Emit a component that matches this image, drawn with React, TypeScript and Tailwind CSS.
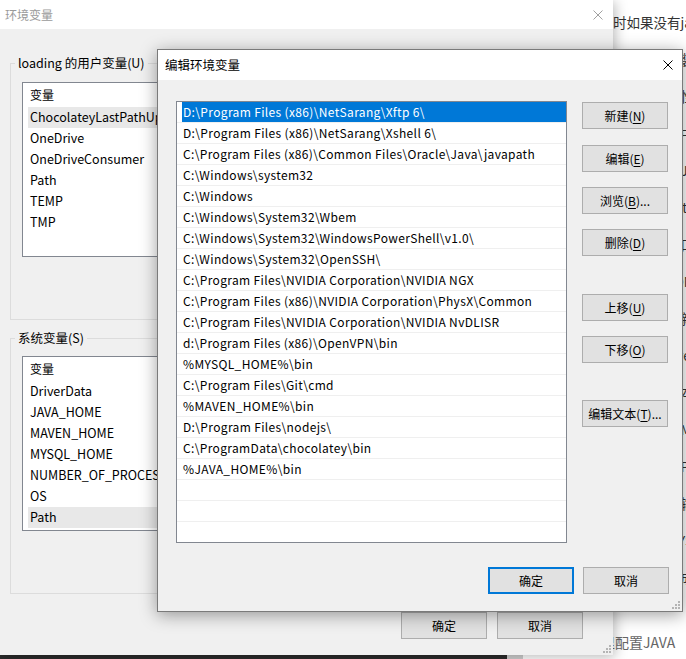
import React from "react";

const PATHS = [
  "D:\\Program Files (x86)\\NetSarang\\Xftp 6\\",
  "D:\\Program Files (x86)\\NetSarang\\Xshell 6\\",
  "C:\\Program Files (x86)\\Common Files\\Oracle\\Java\\javapath",
  "C:\\Windows\\system32",
  "C:\\Windows",
  "C:\\Windows\\System32\\Wbem",
  "C:\\Windows\\System32\\WindowsPowerShell\\v1.0\\",
  "C:\\Windows\\System32\\OpenSSH\\",
  "C:\\Program Files\\NVIDIA Corporation\\NVIDIA NGX",
  "C:\\Program Files (x86)\\NVIDIA Corporation\\PhysX\\Common",
  "C:\\Program Files\\NVIDIA Corporation\\NVIDIA NvDLISR",
  "d:\\Program Files (x86)\\OpenVPN\\bin",
  "%MYSQL_HOME%\\bin",
  "C:\\Program Files\\Git\\cmd",
  "%MAVEN_HOME%\\bin",
  "D:\\Program Files\\nodejs\\",
  "C:\\ProgramData\\chocolatey\\bin",
  "%JAVA_HOME%\\bin",
  "",
  "",
  "",
];

const USER_VARS = ["ChocolateyLastPathUpdate", "OneDrive", "OneDriveConsumer", "Path", "TEMP", "TMP"];
const SYS_VARS = ["DriverData", "JAVA_HOME", "MAVEN_HOME", "MYSQL_HOME", "NUMBER_OF_PROCESSORS", "OS", "Path"];

// text of the page behind the dialogs (mostly hidden)
const PAGE_LINES = [
  "时如果没有java环境变量，命令行会提示找不到命令",
  "如果已经安装过JDK，可以直接跳过下面的步骤",
  "打开系统属性，点击高级系统设置中的环境变量",
  "在系统变量中新建变量名为JAVA_HOME的变量",
  "变量值填写JDK的安装目录，例如D:\\Java\\jdk",
  "然后找到Path变量，点击编辑按钮进行修改",
  "在弹出的窗口中点击新建，添加以下内容",
  "%JAVA_HOME%\\bin 以及 %JAVA_HOME%\\jre\\bin",
  "保存之后重新打开命令行窗口进行验证",
  "输入 java -version 查看版本号是否正确",
  "如果显示版本信息，说明环境变量配置成功",
  "接下来配置MAVEN_HOME，步骤与上面相同",
  "同样需要在Path中添加 %MAVEN_HOME%\\bin",
  "打开命令行输入 mvn -v 进行检查验证",
  "最后配置MYSQL_HOME，添加到Path中即可",
  "所有配置完成以后记得点击确定保存设置",
];

function CloseIcon({ className }: { className?: string }) {
  return (
    <svg width="10" height="10" viewBox="0 0 10 10" className={className}>
      <path d="M0.5 0.5 L9.5 9.5 M9.5 0.5 L0.5 9.5" stroke="currentColor" strokeWidth="1" fill="none" />
    </svg>
  );
}

function Grip({ className }: { className?: string }) {
  return (
    <svg width="9" height="9" viewBox="0 0 9 9" className={className}>
      <g fill="#b4b4b4">
        <rect x="7" y="1" width="2" height="2" />
        <rect x="4" y="4" width="2" height="2" />
        <rect x="7" y="4" width="2" height="2" />
        <rect x="1" y="7" width="2" height="2" />
        <rect x="4" y="7" width="2" height="2" />
        <rect x="7" y="7" width="2" height="2" />
      </g>
    </svg>
  );
}

function WinButton({
  children,
  primary,
  className = "",
}: {
  children: React.ReactNode;
  primary?: boolean;
  className?: string;
}) {
  return (
    <div
      className={
        "w-[86px] h-[27px] shrink-0 flex items-center justify-center bg-[#e1e1e1] text-[12px] text-black " +
        (primary ? "border-2 border-[#0078d7] " : "border border-[#adadad] ") +
        className
      }
    >
      {children}
    </div>
  );
}

function Key({ children }: { children: React.ReactNode }) {
  return <span className="underline underline-offset-2">{children}</span>;
}

function VarList({ items, selected }: { items: string[]; selected: number }) {
  return (
    <div className="mx-[11px] h-[175px] bg-white border border-[#828790] pl-[5px] overflow-hidden">
      <div className="h-[24px] flex items-center pl-[2px] text-[12px]">变量</div>
      {items.map((name, i) => (
        <div
          key={name + i}
          className={
            "h-[21px] flex items-center pl-[2px] text-[12.5px] whitespace-nowrap " +
            (i === selected ? "bg-[#e8e8e8]" : "")
          }
        >
          {name}
        </div>
      ))}
    </div>
  );
}

function EnvDialog() {
  return (
    <div className="absolute left-0 top-0 w-[613px] h-[655px] flex flex-col bg-[#f0f0f0] shadow-[2px_2px_12px_rgba(0,0,0,0.28)]">
      <div className="h-[29px] shrink-0 bg-white flex items-center justify-between pl-[5px] pr-[10px]">
        <span className="text-[12px] text-[#9a9a9a]">环境变量</span>
        <CloseIcon className="text-[#a0a0a0]" />
      </div>
      <div className="relative flex-1 flex flex-col px-[10px] pt-[26px]">
        <fieldset className="h-[265px] border border-[#dcdcdc]">
          <legend className="ml-[4px] px-[3px] text-[12.5px] leading-[16px]">loading 的用户变量(U)</legend>
          <div className="mt-[11px]">
            <VarList items={USER_VARS} selected={0} />
          </div>
        </fieldset>
        <fieldset className="mt-[10px] h-[264px] border border-[#dcdcdc]">
          <legend className="ml-[4px] px-[3px] text-[12.5px] leading-[16px]">系统变量(S)</legend>
          <div className="mt-[10px]">
            <VarList items={SYS_VARS} selected={6} />
          </div>
        </fieldset>
        <div className="mt-[18px] flex justify-end gap-[10px] pr-[20px]">
          <WinButton className="w-[85px]">确定</WinButton>
          <WinButton>取消</WinButton>
        </div>
        <Grip className="absolute right-[2px] bottom-[2px]" />
      </div>
    </div>
  );
}

function EditDialog() {
  return (
    <div className="absolute left-[157px] top-[49px] w-[526px] h-[563px] flex flex-col border border-[#7a7a7a] bg-[#f0f0f0] shadow-[0_3px_16px_rgba(0,0,0,0.38)]">
      <div className="h-[30px] shrink-0 bg-white flex items-center justify-between pl-[7px] pr-[9px]">
        <span className="text-[12.5px] text-black">编辑环境变量</span>
        <CloseIcon className="text-black" />
      </div>
      <div className="relative flex-1 flex flex-col pl-[18px] pr-[13px] pt-[21px] pb-[17px]">
        <div className="flex gap-[15px]">
          <div className="w-[391px] h-[442px] bg-white border border-[#828790] overflow-hidden">
            {PATHS.map((p, i) => (
              <div key={i} className="h-[21px] border-b border-[#efefef] flex">
                <div
                  className={
                    "ml-[5px] flex-1 flex items-center pl-[1px] text-[12px] tracking-[0.35px] whitespace-nowrap " +
                    (i === 0 ? "bg-[#0078d7] text-white" : "text-black")
                  }
                >
                  {p}
                </div>
              </div>
            ))}
          </div>
          <div className="flex flex-col pt-[1px]">
            <WinButton>
              新建(<Key>N</Key>)
            </WinButton>
            <WinButton className="mt-[16px]">
              编辑(<Key>E</Key>)
            </WinButton>
            <WinButton className="mt-[15px]">
              浏览(<Key>B</Key>)...
            </WinButton>
            <WinButton className="mt-[15px]">
              删除(<Key>D</Key>)
            </WinButton>
            <WinButton className="mt-[38px]">
              上移(<Key>U</Key>)
            </WinButton>
            <WinButton className="mt-[15px]">
              下移(<Key>O</Key>)
            </WinButton>
            <WinButton className="mt-[37px]">
              编辑文本(<Key>T</Key>)...
            </WinButton>
          </div>
        </div>
        <div className="mt-auto flex justify-end gap-[9px]">
          <WinButton primary>确定</WinButton>
          <WinButton>取消</WinButton>
        </div>
        <Grip className="absolute right-[2px] bottom-[2px]" />
      </div>
    </div>
  );
}

function BackgroundPage() {
  return (
    <div className="h-full flex flex-col">
      <div className="pl-[613px] pt-[12px] flex flex-col">
        {PAGE_LINES.map((line, i) => (
          <div key={i} className="h-[37px] text-[13.5px] leading-[20px] text-[#333] whitespace-nowrap">
            {line}
          </div>
        ))}
      </div>
      <div className="mt-auto pl-[601px] pb-[4px] text-[14px] leading-[16px] text-[#666] whitespace-nowrap">
        里配置JAVA
      </div>
      <div className="h-[5px] flex shrink-0">
        <div className="w-[507px] bg-[#2b2b2b]" />
        <div className="w-[16px] bg-[#cfcfcf]" />
      </div>
    </div>
  );
}

export default function App() {
  return (
    <div className="relative w-[686px] h-[659px] overflow-hidden bg-white font-['Noto_Sans_CJK_SC','Noto_Sans',sans-serif] text-black">
      <BackgroundPage />
      <EnvDialog />
      <EditDialog />
    </div>
  );
}
